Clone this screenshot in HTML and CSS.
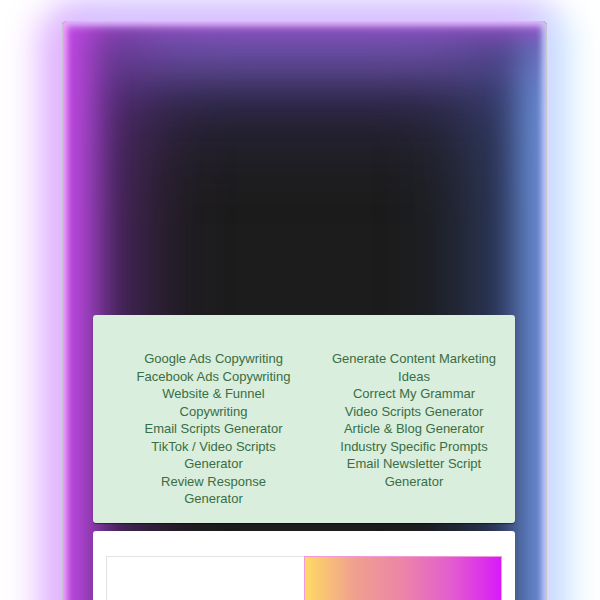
FILE: index.html
```html
<!DOCTYPE html>
<html>
<head>
<meta charset="utf-8">
<link rel="stylesheet" href="styles.css">
</head>
<body>
<div class="page">
  <div class="frame">
    <div class="alert">
      <ul class="col col-left">
        <li>Google Ads Copywriting</li>
        <li>Facebook Ads Copywriting</li>
        <li>Website &amp; Funnel Copywriting</li>
        <li>Email Scripts Generator</li>
        <li>TikTok / Video Scripts Generator</li>
        <li>Review Response Generator</li>
      </ul>
      <ul class="col col-right">
        <li>Generate Content Marketing Ideas</li>
        <li>Correct My Grammar</li>
        <li>Video Scripts Generator</li>
        <li>Article &amp; Blog Generator</li>
        <li>Industry Specific Prompts</li>
        <li>Email Newsletter Script Generator</li>
      </ul>
    </div>
    <div class="panel">
      <div class="split">
        <div class="half half-plain"></div>
        <div class="half half-grad"></div>
      </div>
    </div>
  </div>
</div>
</body>
</html>
```
FILE: styles.css
```css
html, body {
  margin: 0;
  padding: 0;
  background: #ffffff;
  overflow: hidden;
}
body {
  font-family: "Liberation Sans", Arial, sans-serif;
}
.page {
  padding: 21px 0 0 62px;
  height: 600px;
  box-sizing: border-box;
}
.frame {
  width: 485px;
  height: 700px;
  box-sizing: border-box;
  border: 1px solid #c9c4cf;
  border-radius: 4px;
  background: #1c1c1c;
  padding: 293px 31px 0 30px;
  box-shadow:
    inset 4px 0 6px rgba(250, 170, 255, 0.8),
    inset -4px 0 6px rgba(190, 215, 255, 0.8),
    inset 0 4px 8px rgba(225, 190, 255, 0.8),
    inset 28px 0 36px #c24ae6,
    inset 55px 0 100px #6a2c8a,
    inset -24px 0 34px #6c9ee2,
    inset -55px 0 100px #34497a,
    inset 0 38px 50px #9474dc,
    inset 0 70px 110px #463a7c,
    -18px 0 36px 4px #e2b2ff,
    18px 0 36px 4px #c8e6ff,
    0 -14px 30px 4px #dcc6ff;
}
.alert {
  background: #d9eedc;
  border-radius: 3px;
  box-shadow: 0 1px 1px rgba(0, 0, 0, 0.45);
  padding: 35px 0 15px 42px;
  display: grid;
  grid-template-columns: 157px 180px;
  column-gap: 32px;
  color: #3a6d45;
  font-size: 13px;
  line-height: 17.5px;
  text-align: center;
}
.col {
  list-style: none;
  margin: 0;
  padding: 0;
}
.panel {
  margin-top: 8px;
  background: #ffffff;
  border-radius: 3px;
  padding: 25px 13px 0 13px;
  height: 200px;
}
.split {
  display: flex;
  height: 120px;
}
.half {
  flex: 1;
  box-sizing: border-box;
}
.half-plain {
  border: 1px solid #e2e2e2;
  border-right: none;
}
.half-grad {
  border: 1px solid #f29ad8;
  background: linear-gradient(to right, #ffd964, #f0a08e 25%, #ec84a8 50%, #e25cd0 75%, #d81af8);
}
```
